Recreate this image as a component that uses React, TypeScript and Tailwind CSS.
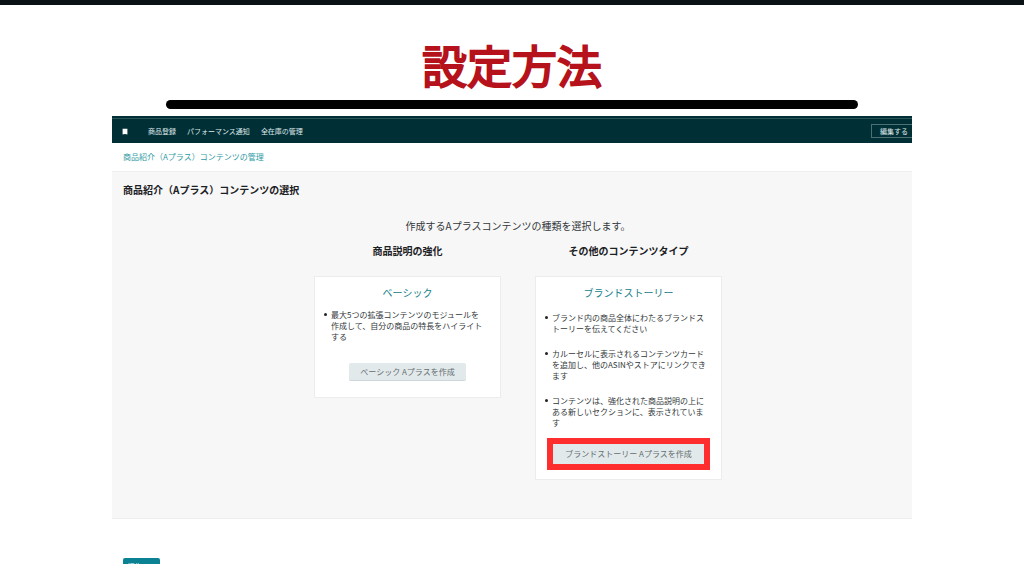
import type { ReactNode } from 'react';

interface ContentType {
  heading: string;
  title: string;
  items: string[][];
  action: string;
  highlighted?: boolean;
}

const navLinks = ['商品登録', 'パフォーマンス通知', '全在庫の管理'];

const contentTypes: ContentType[] = [
  {
    heading: '商品説明の強化',
    title: 'ベーシック',
    items: [['最大5つの拡張コンテンツのモジュールを', '作成して、自分の商品の特長をハイライト', 'する']],
    action: 'ベーシック Aプラスを作成',
  },
  {
    heading: 'その他のコンテンツタイプ',
    title: 'ブランドストーリー',
    items: [
      ['ブランド内の商品全体にわたるブランドス', 'トーリーを伝えてください'],
      ['カルーセルに表示されるコンテンツカード', 'を追加し、他のASINやストアにリンクでき', 'ます'],
      ['コンテンツは、強化された商品説明の上に', 'ある新しいセクションに、表示されていま', 'す'],
    ],
    action: 'ブランドストーリー Aプラスを作成',
    highlighted: true,
  },
];

function Lines({ lines }: { lines: string[] }): ReactNode {
  return lines.map((line) => (
    <span key={line} className="block whitespace-nowrap">
      {line}
    </span>
  ));
}

function NavBar() {
  return (
    <header className="bg-[#002f36] pt-[2px]">
      <nav className="flex h-[25px] items-center border-t border-[#2c5459] pl-[10px] text-[7px] text-[#dfe8e9]">
        <svg viewBox="0 0 6 7" className="h-[7px] w-[6px]" aria-hidden="true">
          <path d="M0.6 0.8h4.8v5.6L3 6 0.6 6.4z" fill="#fff" />
        </svg>
        <div className="flex gap-[11px] pl-5">
          {navLinks.map((link) => (
            <a key={link} href="#" className="whitespace-nowrap">
              {link}
            </a>
          ))}
        </div>
        <button
          type="button"
          className="ml-auto h-[14px] border border-r-0 border-[#4a7075] pl-2 pr-1 leading-none"
        >
          編集する
        </button>
      </nav>
    </header>
  );
}

function ContentCard({ type }: { type: ContentType }) {
  return (
    <div className="flex w-[187px] flex-col items-center">
      <h3 className="text-[10px] font-bold leading-4 text-[#1b2124]">{type.heading}</h3>
      <div
        className={`mt-[17px] flex w-full flex-col items-center border border-[#ebecec] bg-white pt-2 ${
          type.highlighted ? 'pb-[9px]' : 'pb-4'
        }`}
      >
        <h4 className="text-[10px] leading-4 text-[#15808a]">{type.title}</h4>
        <ul
          className={`w-full pl-4 text-[8px] leading-[11px] text-[#33383b] ${
            type.highlighted ? 'space-y-[14px] pt-[11px]' : 'pt-2'
          }`}
        >
          {type.items.map((lines) => (
            <li key={lines[0]} className="relative">
              <span className="absolute -left-[7px] top-1 size-[3px] rounded-full bg-[#222]" />
              <Lines lines={lines} />
            </li>
          ))}
        </ul>
        {type.highlighted ? (
          <div className="mt-[10px] border-[6px] border-[#ff2e2e]">
            <button
              type="button"
              className="block h-5 w-[151px] whitespace-nowrap bg-[#e2e9eb] text-[8px] text-[#656d70]"
            >
              {type.action}
            </button>
          </div>
        ) : (
          <button
            type="button"
            className="mt-[21px] block h-[18px] w-[117px] whitespace-nowrap rounded-xs border-b border-[#cdd6d8] bg-[#e2e9eb] text-[8px] text-[#656d70]"
          >
            {type.action}
          </button>
        )}
      </div>
    </div>
  );
}

export default function App() {
  return (
    <div
      lang="ja"
      className="min-h-screen border-t-[5px] border-[#0b1216] bg-white font-['Noto_Sans_CJK_JP',sans-serif]"
    >
      <h1 className="pt-[30px] text-center text-[45px] font-normal leading-[60px] text-[#b5121b] [-webkit-text-stroke:2px_#b5121b]">
        設定方法
      </h1>
      <div className="mx-[166px] mt-[5px] h-[9px] rounded-full bg-black" />

      <div className="mx-28 mt-[7px]">
        <NavBar />
        <div className="flex h-7 items-center px-[11px]">
          <a href="#" className="text-[8px] text-[#2f9aa3]">
            商品紹介（Aプラス）コンテンツの管理
          </a>
        </div>

        <main className="border-y border-[#eeeeee] bg-[#f7f7f7] pb-[38px] pt-[10px]">
          <h2 className="px-[11px] text-[10px] font-bold leading-4 text-[#1b2124]">
            商品紹介（Aプラス）コンテンツの選択
          </h2>
          <div className="pl-3 pt-5">
            <p className="text-center text-[10px] leading-4 text-[#33383b]">
              作成するAプラスコンテンツの種類を選択します。
            </p>
            <div className="mt-[9px] flex items-start justify-center gap-[34px]">
              {contentTypes.map((type) => (
                <ContentCard key={type.title} type={type} />
              ))}
            </div>
          </div>
        </main>

        {/* only the top edge of the language button is visible */}
        <div className="mt-[39px] h-[6px] overflow-hidden pl-[11px]">
          <button
            type="button"
            className="block h-4 w-[37px] rounded-xs bg-[#0b8294] text-[7px] leading-4 text-white"
          >
            編集　へ
          </button>
        </div>
      </div>
    </div>
  );
}
